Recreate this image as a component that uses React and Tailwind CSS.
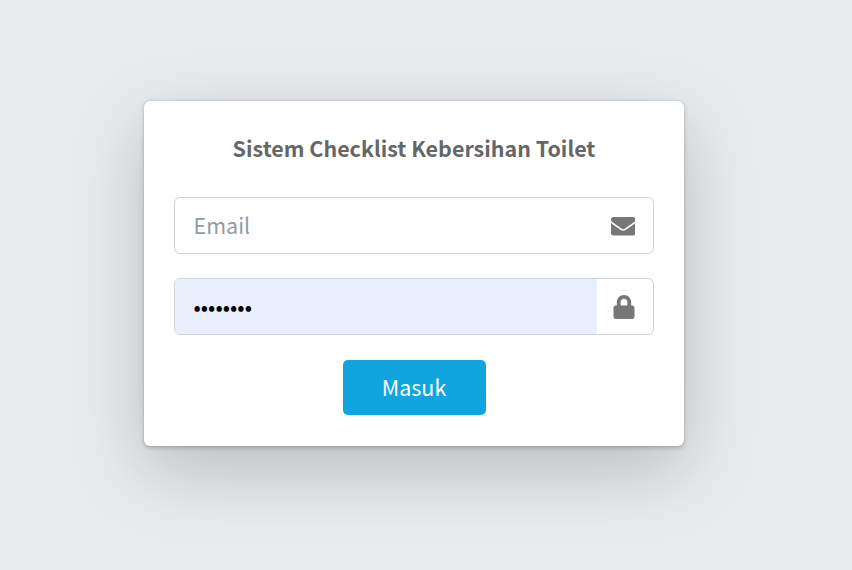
import { FaEnvelope, FaLock } from "react-icons/fa";

export default function App() {
  return (
    <main className="h-screen w-screen overflow-hidden bg-[#e8ecef] pt-[101px] pl-[144px] font-['Noto_Sans_CJK_JP','Noto_Sans',sans-serif] text-[21.5px]">
      <section className="flex h-[345px] w-[540px] flex-col items-center rounded-[6px] bg-white px-[30px] shadow-[0_24px_72px_rgba(8,0,8,0.205),0_0_1.5px_rgba(0,0,0,0.15),0_1.5px_4.5px_rgba(0,0,0,0.2)]">
        <h1 className="mt-[29px] h-[36px] text-[21.47px] leading-[36px] font-bold whitespace-nowrap text-[#666]">Sistem Checklist Kebersihan Toilet</h1>
        <label className="mt-[31px] flex h-[57px] w-[480px] shrink-0 items-center rounded-[6px] border border-[#ced4da] pr-[18px] pl-[18.5px]">
          <input type="email" placeholder="Email" className="h-full min-w-0 flex-1 bg-transparent pb-[3px] outline-none placeholder:text-[#939ba2]" />
          <FaEnvelope className="mt-[1px] size-[24.5px] text-[#777]" />
        </label>
        <label className="mt-[24px] flex h-[57px] w-[480px] shrink-0 overflow-hidden rounded-[6px] border border-[#ced4da]">
          <input type="password" defaultValue="password" className="h-full w-[422px] bg-[#e8f0fe] pb-[3px] pl-[18.5px] text-black outline-none" />
          <span className="flex flex-1 items-center justify-center pt-[1px] pr-[2px]">
            <FaLock className="size-[24px] text-[#777]" />
          </span>
        </label>
        <button className="mt-[25px] h-[55px] w-[143px] shrink-0 rounded-[5px] bg-[#11a5df] pb-[1px] text-white">Masuk</button>
      </section>
    </main>
  );
}
